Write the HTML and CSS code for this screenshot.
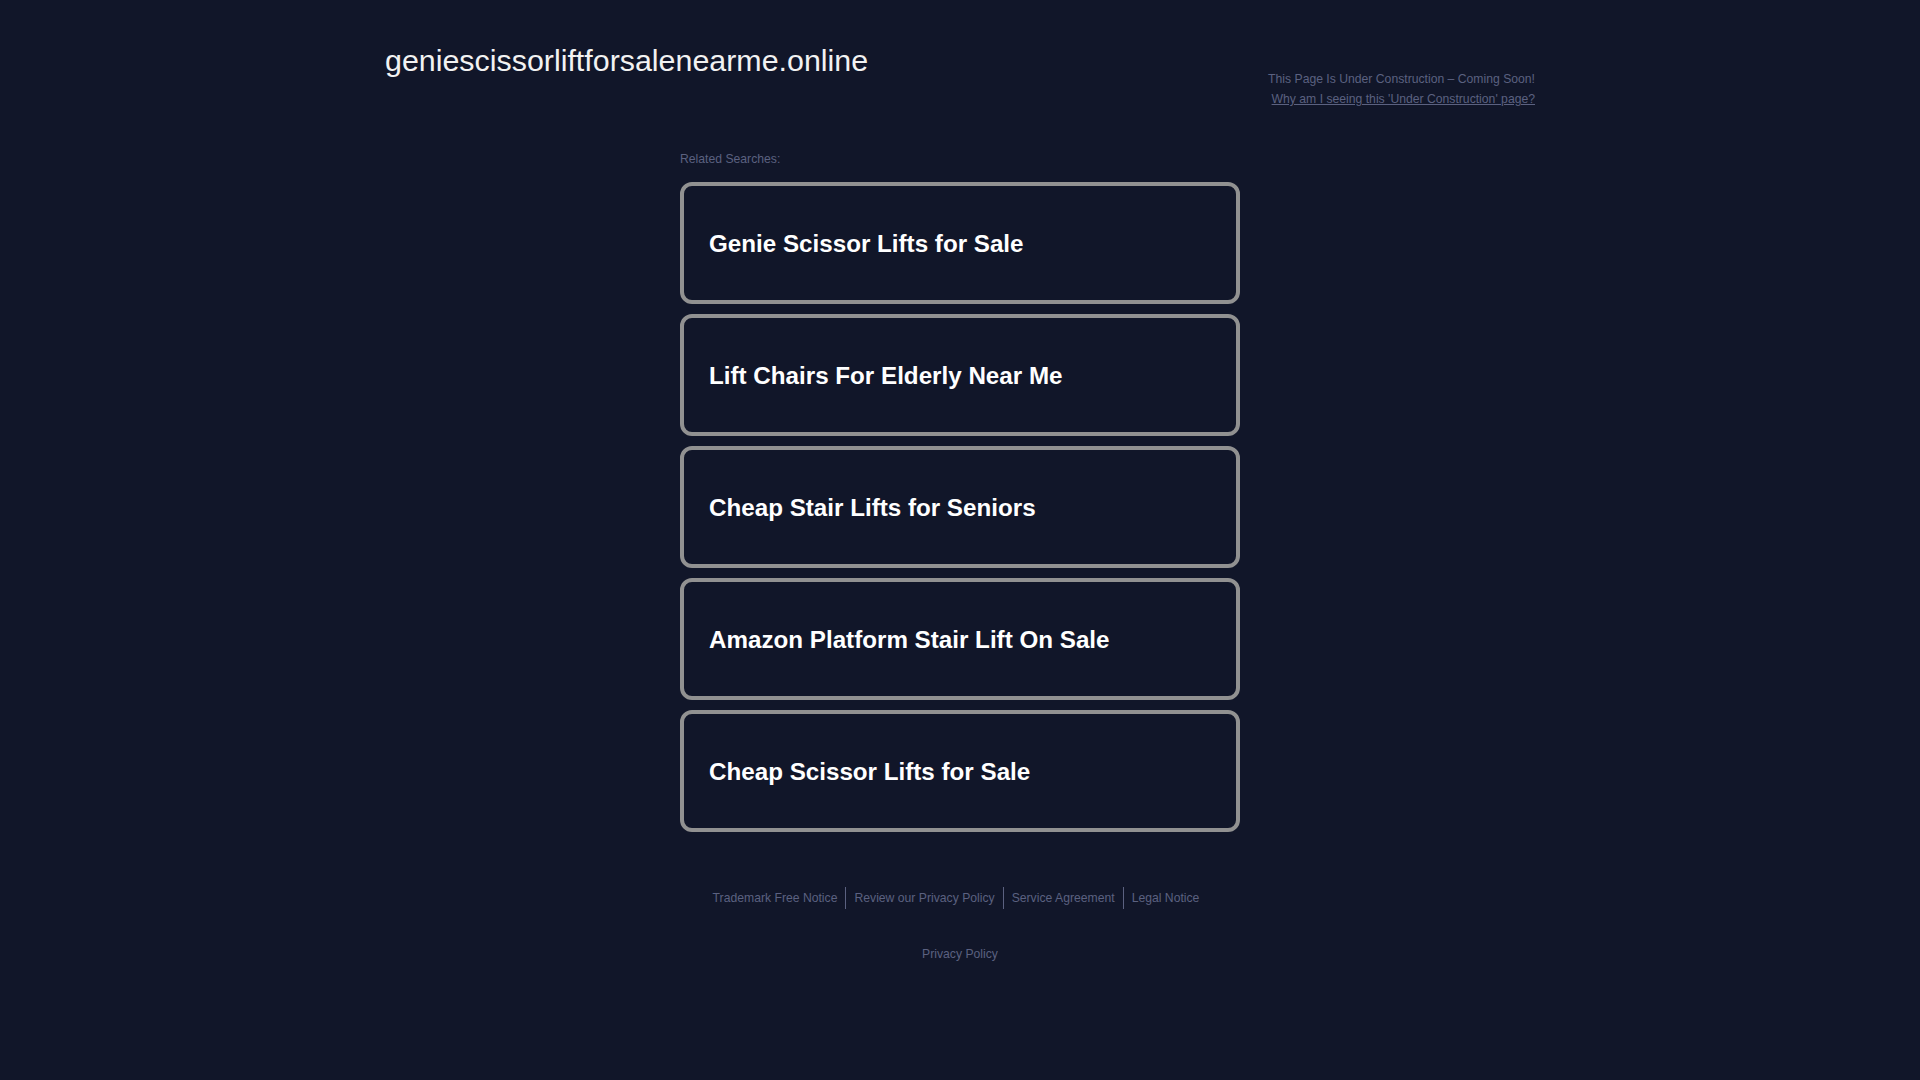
FILE: index.html
```html
<!DOCTYPE html>
<html lang="en">
<head>
<meta charset="utf-8">
<title>geniescissorliftforsalenearme.online</title>
<link rel="stylesheet" href="styles.css">
</head>
<body>
<div class="header">
  <div class="domain">geniescissorliftforsalenearme.online</div>
  <div class="notice">
    <div class="notice-line">This Page Is Under Construction – Coming Soon!</div>
    <div class="notice-line"><a href="#" class="notice-link">Why am I seeing this 'Under Construction' page?</a></div>
  </div>
</div>
<div class="main">
  <div class="related-label">Related Searches:</div>
  <a href="#" class="result">Genie Scissor Lifts for Sale</a>
  <a href="#" class="result">Lift Chairs For Elderly Near Me</a>
  <a href="#" class="result">Cheap Stair Lifts for Seniors</a>
  <a href="#" class="result">Amazon Platform Stair Lift On Sale</a>
  <a href="#" class="result">Cheap Scissor Lifts for Sale</a>
</div>
<div class="footer">
  <div class="footer-links">
    <a href="#" class="footer-link">Trademark Free Notice</a>
    <a href="#" class="footer-link">Review our Privacy Policy</a>
    <a href="#" class="footer-link">Service Agreement</a>
    <a href="#" class="footer-link">Legal Notice</a>
  </div>
  <div class="footer-privacy"><a href="#" class="footer-plain">Privacy Policy</a></div>
</div>
</body>
</html>
```
FILE: styles.css
```css
html, body {
  margin: 0;
  padding: 0;
}
body {
  background: #111629;
  font-family: "Liberation Sans", Arial, sans-serif;
  color: #ffffff;
  min-height: 1080px;
}
a {
  text-decoration: none;
}
.header {
  width: 1150px;
  margin: 0 auto;
  padding-top: 43px;
  display: flex;
  justify-content: space-between;
  align-items: flex-start;
}
.domain {
  font-size: 30.4px;
  line-height: 34px;
  color: #f2f2f2;
}
.notice {
  padding-top: 26px;
  text-align: right;
  font-size: 12.2px;
  line-height: 20px;
  color: #5b6180;
}
.notice-link {
  color: #5b6180;
  text-decoration: underline;
}
.main {
  width: 560px;
  margin: 42px auto 0;
}
.related-label {
  font-size: 12.2px;
  line-height: 16px;
  color: #5b6180;
  margin-bottom: 15px;
}
.result {
  display: flex;
  align-items: center;
  box-sizing: border-box;
  height: 122px;
  margin-bottom: 10px;
  padding: 1px 25px 0;
  border: 4px solid #919191;
  border-radius: 12px;
  color: #ffffff;
  font-weight: bold;
  font-size: 24.2px;
}
.footer {
  margin-top: 55px;
  text-align: center;
  font-size: 12.2px;
}
.footer-links {
  display: flex;
  justify-content: center;
  padding-right: 8px;
}
.footer-link {
  color: #5b6180;
  line-height: 22px;
  padding: 0 8px;
  border-left: 1px solid #5b6180;
}
.footer-link:first-child {
  border-left: none;
}
.footer-privacy {
  margin-top: 34px;
  line-height: 22px;
}
.footer-plain {
  color: #5b6180;
}
```
